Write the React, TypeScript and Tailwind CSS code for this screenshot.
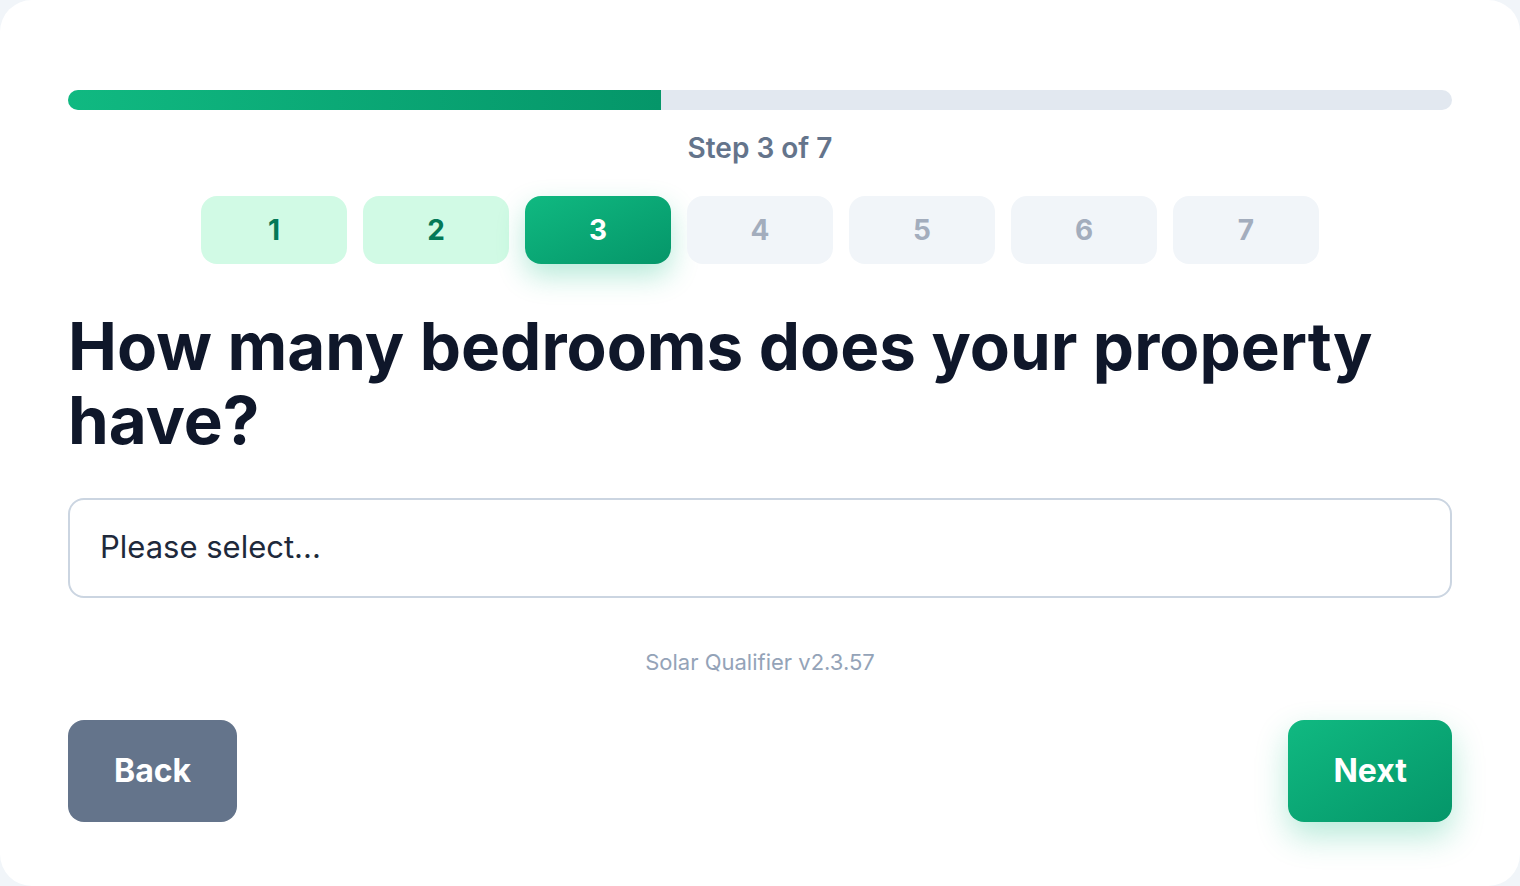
const steps = [1, 2, 3, 4, 5, 6, 7];
const current = 3;

export default function App() {
  return (
    <div className="min-h-screen bg-[#f1f5f9] font-['Inter',sans-serif]">
      <div className="flex h-[886px] w-full flex-col rounded-[32px] bg-white px-[68px] pt-[90px]">
        {/* Progress */}
        <div className="h-5 w-full overflow-hidden rounded-full bg-[#e2e8f0]">
          <div
            className="h-full bg-gradient-to-r from-[#10b981] to-[#059669]"
            style={{ width: `${(current / steps.length) * 100}%` }}
          />
        </div>
        <p className="mt-5 text-center text-[28px] leading-9 font-semibold text-[#64748b]">
          Step {current} of {steps.length}
        </p>

        <div className="mt-[30px] flex justify-center gap-4">
          {steps.map((step) => {
            if (step < current) {
              return (
                <div
                  key={step}
                  className="flex h-[68px] w-[146px] items-center justify-center rounded-2xl bg-[#d1fae5] text-[28px] font-bold text-[#047857]"
                >
                  {step}
                </div>
              );
            }
            if (step === current) {
              return (
                <div
                  key={step}
                  className="flex h-[68px] w-[146px] items-center justify-center rounded-2xl bg-gradient-to-br from-[#10b981] to-[#059669] text-[28px] font-bold text-white shadow-[0_12px_28px_rgba(16,185,129,0.3)]"
                >
                  {step}
                </div>
              );
            }
            return (
              <div
                key={step}
                className="flex h-[68px] w-[146px] items-center justify-center rounded-2xl bg-[#f1f5f9] text-[28px] font-bold text-[#a3adbd]"
              >
                {step}
              </div>
            );
          })}
        </div>

        <h1 className="mt-[46px] text-[65.5px] leading-[74px] font-bold text-[#0f172a]">
          How many bedrooms does your property have?
        </h1>

        <div className="mt-10 flex h-[100px] items-center rounded-2xl border-2 border-[#cbd5e1] px-[30px] pb-0.5 text-[31px] text-[#1e293b]">
          Please select...
        </div>

        <p className="mt-[50px] text-center text-[22px] leading-7 text-[#94a3b8]">
          Solar Qualifier v2.3.57
        </p>

        <div className="mt-11 flex justify-between">
          <button className="flex h-[102px] items-center rounded-2xl bg-[#64748b] px-[46px] text-[32px] font-bold text-white">
            Back
          </button>
          <button className="flex h-[102px] items-center rounded-2xl bg-gradient-to-br from-[#10b981] to-[#059669] px-[45px] text-[32px] font-bold text-white shadow-[0_14px_32px_rgba(16,185,129,0.3)]">
            Next
          </button>
        </div>
      </div>
    </div>
  );
}
